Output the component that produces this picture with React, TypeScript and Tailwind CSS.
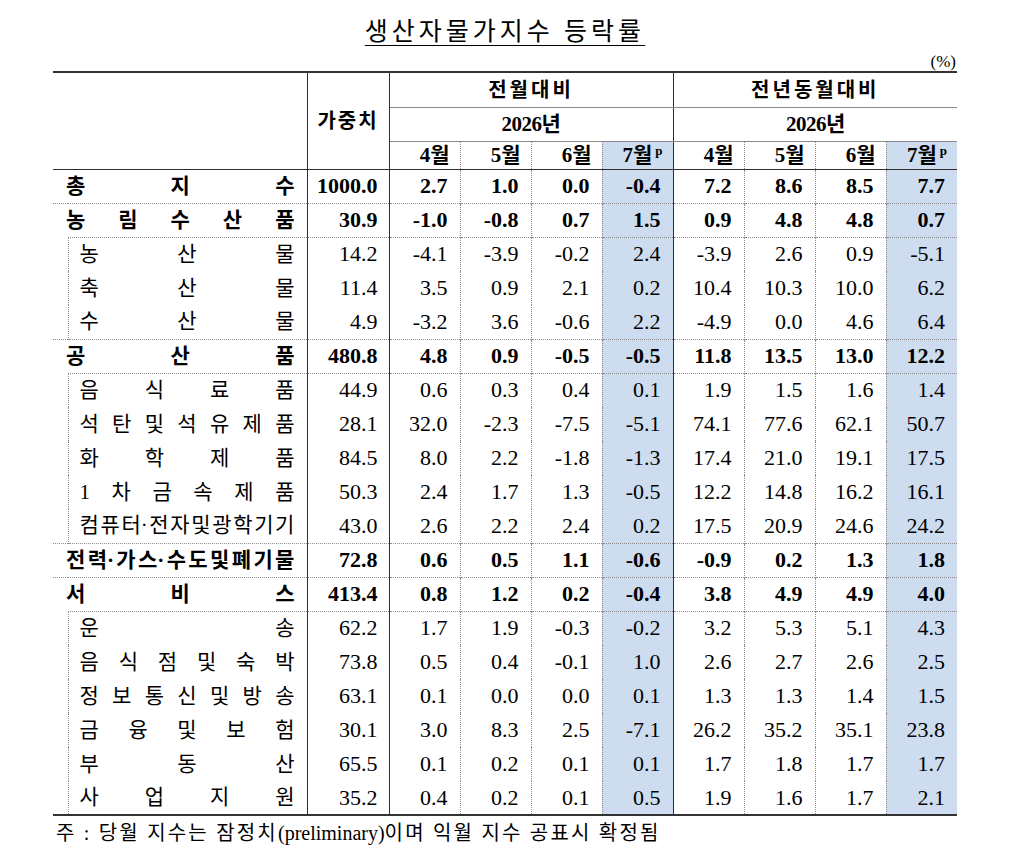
const FONT = "[font-family:'Liberation_Serif','Noto_Sans_CJK_KR',serif]"

type Row = {
  label: string
  bold?: boolean
  weight: string
  values: string[]
}

const groups: { head: Row; subs: Row[] }[] = [
  {
    head: { label: '총 지 수', bold: true, weight: '1000.0', values: ['2.7', '1.0', '0.0', '-0.4', '7.2', '8.6', '8.5', '7.7'] },
    subs: [],
  },
  {
    head: { label: '농 림 수 산 품', bold: true, weight: '30.9', values: ['-1.0', '-0.8', '0.7', '1.5', '0.9', '4.8', '4.8', '0.7'] },
    subs: [
      { label: '농 산 물', weight: '14.2', values: ['-4.1', '-3.9', '-0.2', '2.4', '-3.9', '2.6', '0.9', '-5.1'] },
      { label: '축 산 물', weight: '11.4', values: ['3.5', '0.9', '2.1', '0.2', '10.4', '10.3', '10.0', '6.2'] },
      { label: '수 산 물', weight: '4.9', values: ['-3.2', '3.6', '-0.6', '2.2', '-4.9', '0.0', '4.6', '6.4'] },
    ],
  },
  {
    head: { label: '공 산 품', bold: true, weight: '480.8', values: ['4.8', '0.9', '-0.5', '-0.5', '11.8', '13.5', '13.0', '12.2'] },
    subs: [
      { label: '음 식 료 품', weight: '44.9', values: ['0.6', '0.3', '0.4', '0.1', '1.9', '1.5', '1.6', '1.4'] },
      { label: '석 탄 및 석 유 제 품', weight: '28.1', values: ['32.0', '-2.3', '-7.5', '-5.1', '74.1', '77.6', '62.1', '50.7'] },
      { label: '화 학 제 품', weight: '84.5', values: ['8.0', '2.2', '-1.8', '-1.3', '17.4', '21.0', '19.1', '17.5'] },
      { label: '1 차 금 속 제 품', weight: '50.3', values: ['2.4', '1.7', '1.3', '-0.5', '12.2', '14.8', '16.2', '16.1'] },
      { label: '컴 퓨 터· 전 자 및 광 학 기 기', weight: '43.0', values: ['2.6', '2.2', '2.4', '0.2', '17.5', '20.9', '24.6', '24.2'] },
    ],
  },
  {
    head: { label: '전 력· 가 스· 수 도 및 폐 기 물', bold: true, weight: '72.8', values: ['0.6', '0.5', '1.1', '-0.6', '-0.9', '0.2', '1.3', '1.8'] },
    subs: [],
  },
  {
    head: { label: '서 비 스', bold: true, weight: '413.4', values: ['0.8', '1.2', '0.2', '-0.4', '3.8', '4.9', '4.9', '4.0'] },
    subs: [
      { label: '운 송', weight: '62.2', values: ['1.7', '1.9', '-0.3', '-0.2', '3.2', '5.3', '5.1', '4.3'] },
      { label: '음 식 점 및 숙 박', weight: '73.8', values: ['0.5', '0.4', '-0.1', '1.0', '2.6', '2.7', '2.6', '2.5'] },
      { label: '정 보 통 신 및 방 송', weight: '63.1', values: ['0.1', '0.0', '0.0', '0.1', '1.3', '1.3', '1.4', '1.5'] },
      { label: '금 융 및 보 험', weight: '30.1', values: ['3.0', '8.3', '2.5', '-7.1', '26.2', '35.2', '35.1', '23.8'] },
      { label: '부 동 산', weight: '65.5', values: ['0.1', '0.2', '0.1', '0.1', '1.7', '1.8', '1.7', '1.7'] },
      { label: '사 업 지 원', weight: '35.2', values: ['0.4', '0.2', '0.1', '0.5', '1.9', '1.6', '1.7', '2.1'] },
    ],
  },
]

const R_SOLID = '[border-right:1px_solid_#2e2e2e]'
const R_DOT = '[border-right:1px_dotted_#8c8c8c]'
const T_DOT = '[border-top:1px_dotted_#8c8c8c]'
const L_DOT = '[border-left:1px_dotted_#8c8c8c]'
const B_GRAY = '[border-bottom:1px_solid_#8c8c8c]'
const B_DARK = '[border-bottom:1px_solid_#2e2e2e]'
const BLUE = 'bg-[#cddcef]'

function Spread({ text }: { text: string }) {
  return (
    <div className="flex justify-between whitespace-nowrap">
      {text.split(' ').map((c, i) => (
        <span key={i}>{c}</span>
      ))}
    </div>
  )
}

function valueCell(v: string, i: number, top: string, bold?: boolean) {
  const right = i === 3 ? R_SOLID : i === 7 ? '' : R_DOT
  const bg = i === 3 || i === 7 ? BLUE : ''
  return (
    <td key={i} className={`${right} ${bg} ${top} pr-3 text-right text-[22px] ${bold ? 'font-bold' : ''}`}>
      {v}
    </td>
  )
}

function DataRow({ row, top, first, indentSpan }: { row: Row; top: boolean; first: boolean; indentSpan?: number }) {
  const t = top ? T_DOT : ''
  return (
    <tr className="h-[34px]">
      {row.bold ? (
        <td colSpan={2} className={`${R_SOLID} ${first ? '' : t} pl-[13px] pr-3 text-[21px] font-bold`}>
          <Spread text={row.label} />
        </td>
      ) : (
        <>
          {indentSpan ? <td rowSpan={indentSpan} /> : null}
          <td className={`${R_SOLID} ${L_DOT} ${t} pl-[11px] pr-3 text-[21px]`}>
            <Spread text={row.label} />
          </td>
        </>
      )}
      <td className={`${R_SOLID} ${first ? '' : t} pr-[11px] text-right text-[22px] ${row.bold ? 'font-bold' : ''}`}>
        {row.weight}
      </td>
      {row.values.map((v, i) => valueCell(v, i, first ? '' : t, row.bold))}
    </tr>
  )
}

function Month({ m, i }: { m: string; i: number }) {
  const last = i === 3
  const right = i === 3 ? R_SOLID : i === 7 ? '' : R_DOT
  return (
    <th className={`${right} ${B_DARK} ${last || i === 7 ? BLUE : ''} pr-[10px] text-right text-[21px] font-bold`}>
      {m}
      {last || i === 7 ? <span className="ml-[3px] text-[13px] font-bold relative top-[-7px]">p</span> : null}
    </th>
  )
}

export default function App() {
  const months = ['4월', '5월', '6월', '7월', '4월', '5월', '6월', '7월']
  return (
    <div className={`min-h-[859px] w-[1030px] bg-white text-black ${FONT}`}>
      <div className="ml-[53px] w-[904px] pt-[16px]">
        <h1 className="h-[32px] text-center text-[25px] leading-[32px] tracking-[4px] underline underline-offset-[5px] decoration-1">
          생산자물가지수 등락률
        </h1>
        <div className="mt-[4px] h-[19px] text-right text-[17px] leading-[19px] pr-[1px]">(%)</div>
        <table className="w-[904px] table-fixed border-collapse leading-none [border-top:2px_solid_#333] [border-bottom:2px_solid_#333]">
          <colgroup>
            <col className="w-[15px]" />
            <col className="w-[239px]" />
            <col className="w-[82px]" />
            {months.map((_, i) => (
              <col key={i} className="w-[71px]" />
            ))}
          </colgroup>
          <thead>
            <tr className="h-[35px]">
              <th colSpan={2} rowSpan={3} className={`${R_SOLID} ${B_DARK}`} />
              <th rowSpan={3} className={`${R_SOLID} ${B_DARK} text-center text-[20px] font-bold tracking-[2px]`}>
                가중치
              </th>
              <th colSpan={4} className={`${R_SOLID} ${B_GRAY} text-center text-[20px] font-bold tracking-[3px]`}>
                전월대비
              </th>
              <th colSpan={4} className={`${B_GRAY} text-center text-[20px] font-bold tracking-[3px]`}>
                전년동월대비
              </th>
            </tr>
            <tr className="h-[34px]">
              <th colSpan={4} className={`${R_SOLID} ${B_GRAY} text-center text-[21px] font-bold tracking-[-0.5px]`}>
                2026년
              </th>
              <th colSpan={4} className={`${B_GRAY} text-center text-[21px] font-bold tracking-[-0.5px]`}>
                2026년
              </th>
            </tr>
            <tr className="h-[28px]">
              {months.map((m, i) => (
                <Month key={i} m={m} i={i} />
              ))}
            </tr>
          </thead>
          <tbody>
            {groups.map((g, gi) => (
              <GroupRows key={gi} head={g.head} subs={g.subs} first={gi === 0} />
            ))}
          </tbody>
        </table>
        <p className="ml-[3px] mt-[4px] text-[20px] leading-[26px] tracking-[2.2px] whitespace-nowrap">
          주 : 당월 지수는 잠정치<span className="tracking-normal">(preliminary)</span>이며 익월 지수 공표시 확정됨
        </p>
      </div>
    </div>
  )
}

function GroupRows({ head, subs, first }: { head: Row; subs: Row[]; first: boolean }) {
  return (
    <>
      <DataRow row={head} top={!first} first={first} />
      {subs.map((s, i) => (
        <DataRow key={i} row={s} top={i === 0} first={false} indentSpan={i === 0 ? subs.length : undefined} />
      ))}
    </>
  )
}
